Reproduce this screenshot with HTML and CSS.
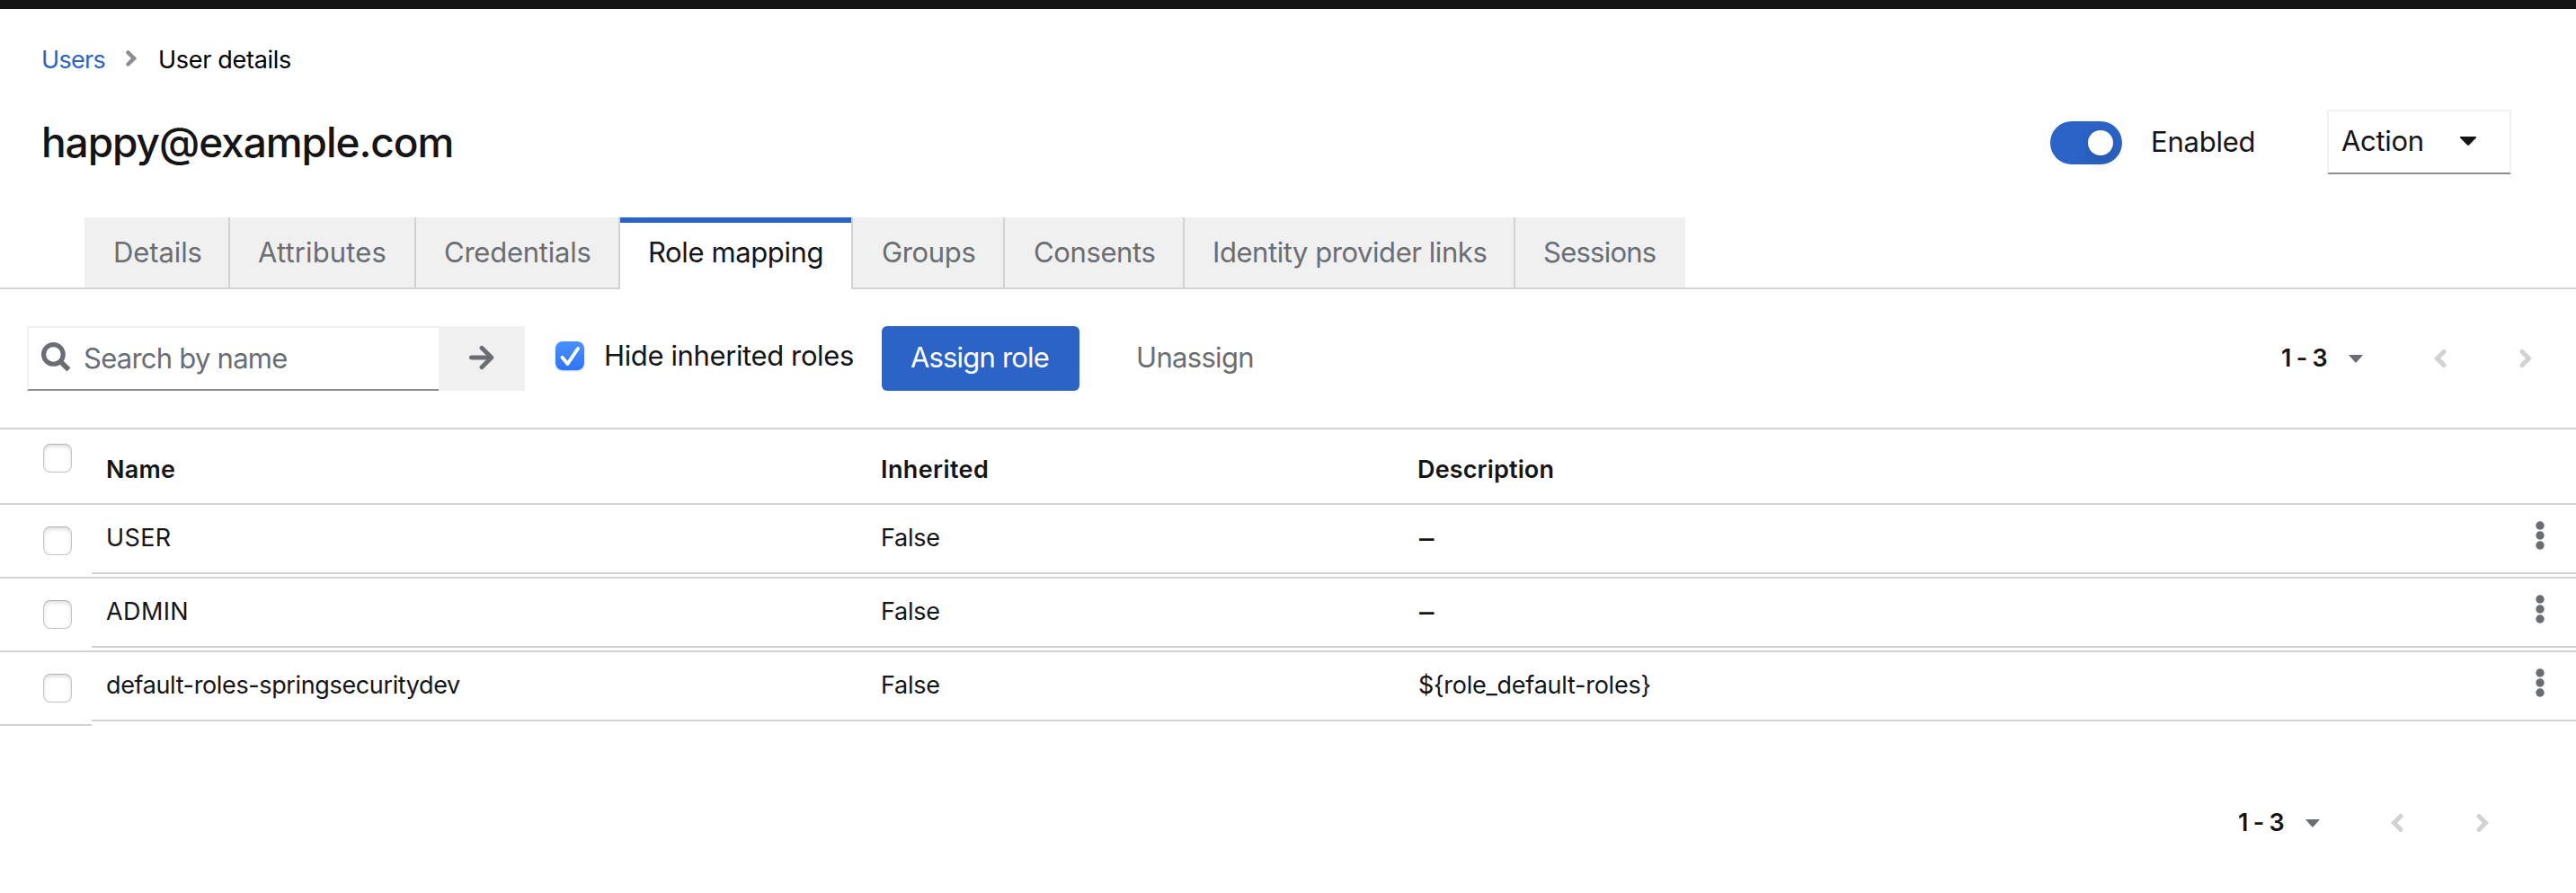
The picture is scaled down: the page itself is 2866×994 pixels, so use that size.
FILE: index.html
```
<!DOCTYPE html>
<html lang="en">
<head>
<meta charset="utf-8">
<title>User details</title>
<link rel="stylesheet" href="styles.css">
</head>
<body>
<div class="masthead"></div>
<nav class="breadcrumb">
  <a class="crumb-link">Users</a>
  <svg class="crumb-sep" width="12" height="18" viewBox="0 0 12 18"><path d="M2.500 2.500 9 9l-6.500 6.500" fill="none" stroke="#8a8d90" stroke-width="4.500" stroke-linecap="round"/></svg>
  <span class="crumb-current">User details</span>
</nav>
<header class="title-row">
  <h1 class="title">happy@example.com</h1>
  <span class="switch"><span class="knob"></span></span>
  <span class="switch-label">Enabled</span>
  <button class="action"><span>Action</span><svg width="20" height="12" viewBox="0 0 20 12"><path d="M1.500 1h17q1 .5.3 1.500l-7.600 7.800q-1.200 1-2.400 0L1.200 2.500Q.5 1.500 1.500 1z" fill="#151515"/></svg></button>
</header>
<nav class="tabs">
  <a class="tab t-details">Details</a>
  <a class="tab t-attributes">Attributes</a>
  <a class="tab t-credentials">Credentials</a>
  <a class="tab t-roles active">Role mapping</a>
  <a class="tab t-groups">Groups</a>
  <a class="tab t-consents">Consents</a>
  <a class="tab t-links">Identity provider links</a>
  <a class="tab t-sessions">Sessions</a>
</nav>
<section class="toolbar">
  <div class="search">
    <svg width="33" height="33" viewBox="0 0 32 32"><circle cx="13" cy="13" r="10.500" fill="none" stroke="#6a6e73" stroke-width="5"/><path d="M20.500 20.500 29.500 29.500" stroke="#6a6e73" stroke-width="5.500"/></svg>
    <span class="search-text">Search by name</span>
  </div>
  <button class="go"><svg width="28" height="28" viewBox="0 0 28 28" fill="none" stroke="#6a6e73" stroke-width="4.800" stroke-linecap="round"><path d="M2.400 14H24"/><path d="M14 3.200 24.800 14 14 24.800" stroke-linejoin="round"/></svg></button>
  <span class="check checked"><svg width="32" height="32" viewBox="0 0 32 32"><path d="M7.500 17.800 13.500 25 25 8" fill="none" stroke="#fff" stroke-width="4" stroke-linecap="round" stroke-linejoin="round"/></svg></span>
  <span class="hide-label">Hide inherited roles</span>
  <button class="assign">Assign role</button>
  <span class="unassign">Unassign</span>
  <div class="pager">
    <span class="range">1 - 3</span>
    <svg class="caret" width="18" height="11" viewBox="0 0 18 11"><path d="M1 1h16L9.800 9.200q-.8.600-1.600 0z" fill="#6a6e73"/></svg>
    <svg class="prev" width="14" height="22" viewBox="0 0 14 22"><path d="M11 3.500 3.500 11l7.500 7.500" class="chev"/></svg>
    <svg class="next" width="14" height="22" viewBox="0 0 14 22"><path d="M3 3.500 10.500 11 3 18.500" class="chev"/></svg>
  </div>
</section>
<section class="table">
  <div class="row head">
    <div class="select"><span class="check"></span></div>
    <div class="cell n-name">Name</div><div class="cell n-inh">Inherited</div><div class="cell n-desc">Description</div><div class="cell"></div>
  </div>
  <div class="row">
    <div class="select"><span class="check"></span></div>
    <div class="cell n-caps">USER</div><div class="cell">False</div><div class="cell dash">–</div>
    <div class="cell menu"><svg width="10" height="32" viewBox="0 0 10 32" fill="#6a6e73"><circle cx="5" cy="5" r="4.700"/><circle cx="5" cy="16" r="4.700"/><circle cx="5" cy="27" r="4.700"/></svg></div>
  </div>
  <div class="row">
    <div class="select"><span class="check"></span></div>
    <div class="cell n-caps">ADMIN</div><div class="cell">False</div><div class="cell dash">–</div>
    <div class="cell menu"><svg width="10" height="32" viewBox="0 0 10 32" fill="#6a6e73"><circle cx="5" cy="5" r="4.700"/><circle cx="5" cy="16" r="4.700"/><circle cx="5" cy="27" r="4.700"/></svg></div>
  </div>
  <div class="row last">
    <div class="select"><span class="check"></span></div>
    <div class="cell n-default">default-roles-springsecuritydev</div><div class="cell">False</div><div class="cell n-role">${role_default-roles}</div>
    <div class="cell menu"><svg width="10" height="32" viewBox="0 0 10 32" fill="#6a6e73"><circle cx="5" cy="5" r="4.700"/><circle cx="5" cy="16" r="4.700"/><circle cx="5" cy="27" r="4.700"/></svg></div>
  </div>
</section>
<footer class="bottom">
  <div class="pager">
    <span class="range">1 - 3</span>
    <svg class="caret" width="18" height="11" viewBox="0 0 18 11"><path d="M1 1h16L9.800 9.200q-.8.600-1.600 0z" fill="#6a6e73"/></svg>
    <svg class="prev" width="14" height="22" viewBox="0 0 14 22"><path d="M11 3.500 3.500 11l7.500 7.500" class="chev"/></svg>
    <svg class="next" width="14" height="22" viewBox="0 0 14 22"><path d="M3 3.500 10.500 11 3 18.500" class="chev"/></svg>
  </div>
</footer>
</body>
</html>
```
FILE: styles.css
```
* { box-sizing: border-box; }
html, body { margin: 0; height: 994px; overflow: hidden; }
body { background: #fff; color: #151515; font: 400 31px/40px Inter, "Liberation Sans", sans-serif; white-space: nowrap; }
svg { display: block; flex: none; }
button { font: inherit; border: 0; margin: 0; padding: 0; background: none; color: inherit; }
.masthead { height: 10px; background: #151515; }

.breadcrumb { display: flex; align-items: center; height: 112px; padding: 2px 0 0 46px; font-size: 27px; color: #000; }
.crumb-link { width: 94px; color: #2b63c6; letter-spacing: -.7px; }
.crumb-sep { margin-bottom: 4px; }
.crumb-current { margin-left: 24px; letter-spacing: -.3px; }

.title-row { display: flex; align-items: center; height: 72px; padding: 0 72px 0 46px; }
.title { flex: 1; margin: 0; font-size: 46px; font-weight: 500; line-height: 60px; letter-spacing: -1.05px; }
.switch { display: flex; justify-content: flex-end; width: 80px; height: 48px; padding: 10px; margin-top: 2px; border-radius: 24px; background: #2b63c6; }
.knob { width: 28px; height: 28px; border-radius: 50%; background: #fff; box-shadow: 0 8px 16px rgba(3, 3, 3, .15); }
.switch-label { width: 196px; margin-left: 32px; letter-spacing: -.23px; }
.action { display: flex; align-items: center; justify-content: space-between; width: 205px; height: 72px; padding: 0 36px 2px 14px; border: 2px solid #f0f0f0; border-bottom-color: #8a8d90; letter-spacing: -.3px; }

.tabs { display: flex; height: 80px; margin-top: 48px; padding-left: 94px; background: linear-gradient(#d2d2d2, #d2d2d2) left bottom / 100% 2px no-repeat; }
.tab { height: 78px; padding-left: 32px; line-height: 78px; border-right: 2px solid #d2d2d2; background: #f0f0f0; color: #6a6e73; }
.tab.active { height: 80px; padding-left: 31px; border: 2px solid #d2d2d2; border-width: 0 2px; background: linear-gradient(#2b63c6, #2b63c6) border-box left top / 100% 6px no-repeat #fff; color: #151515; line-height: 78px; }
.t-details { width: 162px; letter-spacing: -.1px; }
.tab.t-attributes { width: 207px; padding-left: 31px; letter-spacing: .15px; }
.tab.t-credentials { width: 225px; padding-left: 31px; border-right: 0; letter-spacing: -.23px; }
.t-roles { width: 261px; letter-spacing: -.39px; }
.t-groups { width: 169px; letter-spacing: -.34px; }
.t-consents { width: 200px; letter-spacing: -.38px; }
.tab.t-links { width: 368px; padding-left: 31px; letter-spacing: -.44px; }
.tab.t-sessions { width: 189px; padding-left: 31px; border-right: 0; letter-spacing: -.75px; }

.toolbar { display: flex; align-items: center; height: 154px; padding: 0 49px 0 30px; }
.search { display: flex; align-items: center; gap: 14px; width: 458px; height: 72px; padding-left: 14px; border: 2px solid #f0f0f0; border-right: 0; border-bottom-color: #8a8d90; color: #6a6e73; letter-spacing: -.75px; }
.search svg { margin-bottom: 4px; }
.go { display: flex; align-items: center; justify-content: center; width: 96px; height: 72px; padding-bottom: 2px; background: #f0f0f0; }
.check { display: block; flex: none; width: 32px; height: 32px; border: 1px solid #c4c4c4; border-top-color: #b0b0b0; border-radius: 8px; background: #fff; box-shadow: inset 0 2px 4px rgba(0, 0, 0, .14); }
.check.checked { margin: 0 0 6px 34px; border: 0; background: linear-gradient(#4a90fb, #2f74f8); box-shadow: 0 1px 2px rgba(47, 116, 248, .4); }
.hide-label { width: 309px; margin: 0 0 6px 22px; letter-spacing: -.38px; }
.assign { width: 220px; height: 72px; padding: 0 2px 2px 0; border-radius: 6px; background: #2b63c6; color: #fff; letter-spacing: -.8px; }
.unassign { margin: 0 0 2px 63px; color: #6a6e73; letter-spacing: -.68px; }
.pager { display: flex; align-items: center; margin-left: auto; font-size: 27px; font-weight: 600; letter-spacing: -.76px; }
.range { width: 74px; }
.caret { margin-top: 1px; }
.prev { margin-left: 78px; }
.next { margin-left: 81px; }
.chev { fill: none; stroke: #d2d2d2; stroke-width: 5; stroke-linecap: round; }

.table { border-top: 2px solid #d2d2d2; font-size: 27px; }
.row { display: grid; grid-template-columns: 102px 862px 597px 1fr 80px; height: 82px; border-bottom: 2px solid #d2d2d2; }
.select { padding: 24px 0 0 48px; }
.cell { height: 77px; padding: 0 0 0 16px; border-bottom: 2px solid #d2d2d2; line-height: 74px; letter-spacing: -.25px; }
.head { height: 84px; font-weight: 600; }
.head .select { padding-top: 16px; }
.head .cell { border: 0; line-height: 90px; }
.last { border-bottom: 0; }
.last .select { border-bottom: 2px solid #d2d2d2; }
.row .n-name { letter-spacing: .2px; }
.row .n-inh { letter-spacing: .4px; }
.row .n-desc { letter-spacing: .15px; }
.row .n-caps { letter-spacing: .4px; }
.row .n-default { letter-spacing: -.37px; }
.row .n-role { padding-left: 17px; }
.cell.dash { padding-left: 18px; font-size: 33px; }
.cell.menu { padding: 18px 0 0 35px; }
.bottom { display: flex; height: 218px; padding: 0 97px 0 0; }
.bottom .pager { height: 216px; }
```
